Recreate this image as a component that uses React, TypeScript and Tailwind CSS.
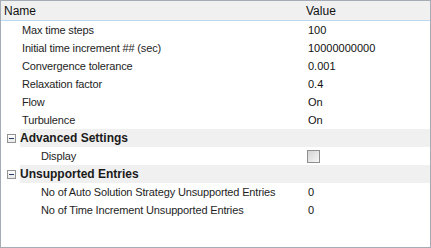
import React from 'react';

interface Prop {
  name: string;
  value?: string;
  check?: boolean;
}

const general: Prop[] = [
  { name: 'Max time steps', value: '100' },
  { name: 'Initial time increment ## (sec)', value: '10000000000' },
  { name: 'Convergence tolerance', value: '0.001' },
  { name: 'Relaxation factor', value: '0.4' },
  { name: 'Flow', value: 'On' },
  { name: 'Turbulence', value: 'On' },
];

const advanced: Prop[] = [{ name: 'Display', check: true }];

const unsupported: Prop[] = [
  { name: 'No of Auto Solution Strategy Unsupported Entries', value: '0' },
  { name: 'No of Time Increment Unsupported Entries', value: '0' },
];

function Row({ prop, nested }: { prop: Prop; nested?: boolean }) {
  return (
    <div className="flex h-[18px] items-center">
      <div
        className={`w-[304px] shrink-0 truncate tracking-[-0.15px] text-[#1e1e1e] ${nested ? 'pl-[40px]' : 'pl-[21px]'}`}
      >
        {prop.name}
      </div>
      <div className="flex-1 pl-[3px] text-[#111]">
        {prop.check ? (
          <div className="ml-[-1px] h-[13px] w-[13px] border border-[#8f8f8f] bg-gradient-to-br from-[#d4d4d4] to-[#f7f7f7]" />
        ) : (
          prop.value
        )}
      </div>
    </div>
  );
}

function Category({ title }: { title: string }) {
  return (
    <div className="flex h-[18px] items-center">
      <div className="flex w-[19px] shrink-0 justify-center">
        <div className="ml-[2px] flex h-[9px] w-[9px] items-center justify-center border border-[#939393] bg-gradient-to-b from-white to-[#e8e8e8]">
          <div className="h-[1px] w-[5px] bg-[#2a3d66]" />
        </div>
      </div>
      <div className="flex h-full flex-1 items-center bg-[#f0f0f0] text-[12px] font-bold text-[#1a1a1a]">
        {title}
      </div>
    </div>
  );
}

export default function App() {
  return (
    <div
      className="h-[248px] w-[431px] border border-[#a5acb5] bg-white text-[11px]"
      style={{ fontFamily: '"Liberation Sans", Arial, sans-serif' }}
    >
      <div className="flex h-[20px] items-center border-b border-[#bcd9f2] bg-[#f0f0f0] text-[12px] text-[#111]">
        <div className="w-[304px] pl-[3px]">Name</div>
        <div className="flex-1 pl-[1px]">Value</div>
      </div>
      {general.map((p) => (
        <Row key={p.name} prop={p} />
      ))}
      <Category title="Advanced Settings" />
      {advanced.map((p) => (
        <Row key={p.name} prop={p} nested />
      ))}
      <Category title="Unsupported Entries" />
      {unsupported.map((p) => (
        <Row key={p.name} prop={p} nested />
      ))}
    </div>
  );
}
